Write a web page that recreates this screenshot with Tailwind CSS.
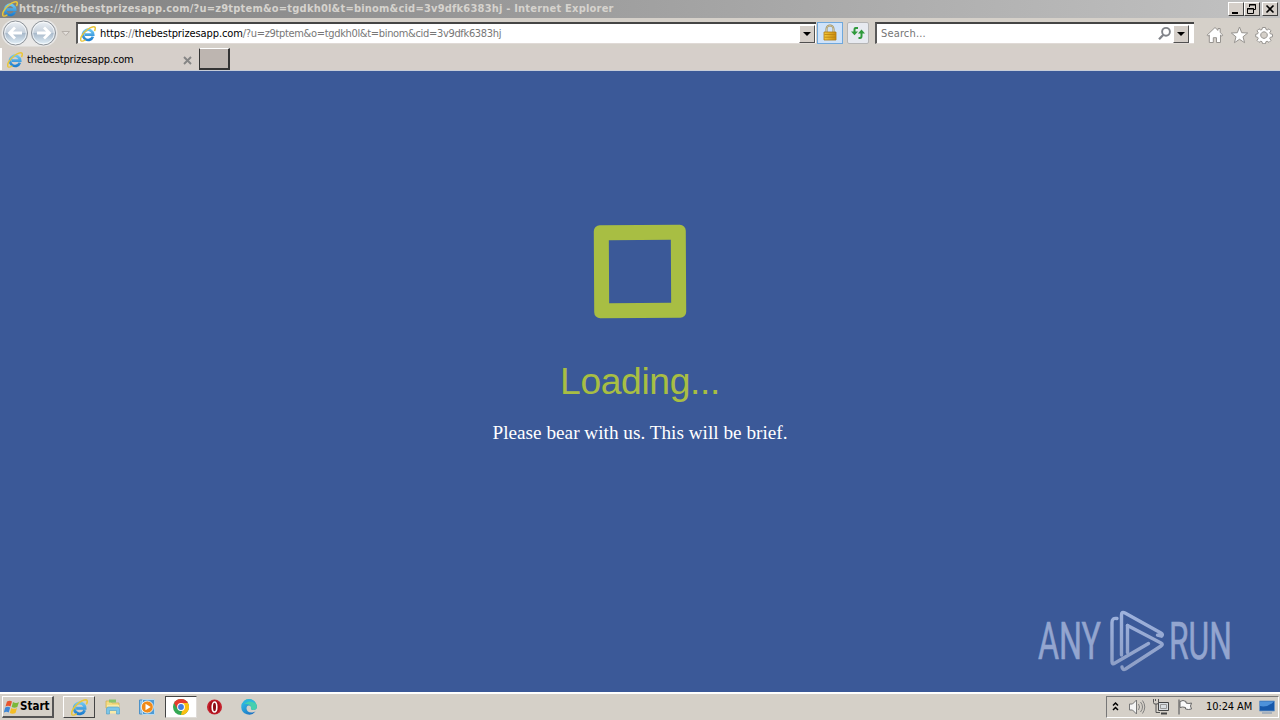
<!DOCTYPE html>
<html lang="en">
<head>
<meta charset="utf-8">
<title>Internet Explorer</title>
<script src="https://cdn.jsdelivr.net/npm/@tailwindcss/browser@4"></script>
</head>
<body class="w-[1280px] h-[720px] overflow-hidden flex flex-col bg-[#d5cfc9] font-['DejaVu_Sans_Condensed','DejaVu_Sans',sans-serif] text-[11px] text-black">
<svg class="absolute w-0 h-0">
  <defs>
    <linearGradient id="ieb" x1="0" y1="0" x2="0" y2="1"><stop offset="0" stop-color="#6cc6f2"/><stop offset="1" stop-color="#1e7fd0"/></linearGradient>
    <linearGradient id="nav" x1="0" y1="0" x2="0" y2="1"><stop offset="0" stop-color="#eef2f6"/><stop offset=".48" stop-color="#c5d0dc"/><stop offset=".52" stop-color="#a9bacb"/><stop offset="1" stop-color="#e6f3fb"/></linearGradient>
    <linearGradient id="gold" x1="0" y1="0" x2="1" y2="0"><stop offset="0" stop-color="#f5c93c"/><stop offset="1" stop-color="#c98a0c"/></linearGradient>
    <linearGradient id="edge" x1="0" y1="0" x2="1" y2="1"><stop offset="0" stop-color="#36c5e8"/><stop offset="1" stop-color="#1561bd"/></linearGradient>
    <linearGradient id="wm" gradientUnits="userSpaceOnUse" x1="0" y1="610" x2="0" y2="672"><stop offset="0" stop-color="#9fb3de"/><stop offset="1" stop-color="#8c9dc4"/></linearGradient>
    <symbol id="ie" viewBox="0 0 16 16">
      <path d="M12.9 10.6A5.1 5.1 0 1 1 13.2 8.7H4.8" fill="none" stroke="url(#ieb)" stroke-width="2.7"/>
      <path d="M1.200 14.900C-.8 12.800 3 6.800 7.600 3.500C11 .9 14.600 .1 15.200 1.600C15.500 2.500 15.100 3.800 14.400 5" fill="none" stroke="#e9c63a" stroke-width="1.500"/>
      <path d="M1.200 14.900C2.200 15.600 4 14.800 5.400 13.800" fill="none" stroke="#e9c63a" stroke-width="1.300"/>
    </symbol>
  </defs>
</svg>

<header class="h-[18px] shrink-0 flex items-center pl-[2px] pr-[2px] bg-linear-to-r from-[#808080] to-[#c2c2c2]">
  <svg class="w-4 h-4 shrink-0"><use href="#ie"/></svg>
  <h1 class="ml-[1px] font-bold text-[#d6d3ce] text-[11px] leading-[18px] whitespace-nowrap tracking-[0.21px]">https://thebestprizesapp.com/?u=z9tptem&amp;o=tgdkh0l&amp;t=binom&amp;cid=3v9dfk6383hj - Internet Explorer</h1>
  <div class="ml-auto flex">
    <button class="w-4 h-[14px] bg-[#d5cfc9] border border-t-white border-l-white border-r-[#404040] border-b-[#404040]"><svg class="w-[14px] h-3"><path d="M3 9h6v2H3z"/></svg></button>
    <button class="w-4 h-[14px] bg-[#d5cfc9] border border-t-white border-l-white border-r-[#404040] border-b-[#404040]"><svg class="w-[14px] h-3" fill="none" stroke="#000"><path d="M4.500 4V1.500h6v5H9M2.500 5.500h6v5h-6zM4 2h7M2 6h7"/></svg></button>
    <button class="ml-[2px] w-4 h-[14px] bg-[#d5cfc9] border border-t-white border-l-white border-r-[#404040] border-b-[#404040]"><svg class="w-[14px] h-3" stroke="#000" stroke-width="1.600"><path d="M3.500 2.500l7 7M10.500 2.500l-7 7"/></svg></button>
  </div>
</header>

<nav class="h-[30px] shrink-0 flex items-start bg-[#d5d0c9] pt-[4px]">
  <svg class="w-[76px] h-[28px] -mt-[3px] shrink-0" viewBox="0 19 76 28">
    <path d="M15 19.500h29a13.500 13.500 0 0 1 0 27H15a13.500 13.500 0 0 1 0-27z" fill="#e9e8e7"/>
    <circle cx="15.500" cy="33" r="12" fill="url(#nav)" stroke="#8e9399"/><circle cx="15.500" cy="33" r="10.800" fill="none" stroke="#fff" stroke-opacity=".7"/>
    <circle cx="43.500" cy="33" r="12" fill="url(#nav)" stroke="#8e9399"/><circle cx="43.500" cy="33" r="10.800" fill="none" stroke="#fff" stroke-opacity=".7"/>
    <path d="M22 33H10M15 27.500L9.500 33l5.500 5.500M37 33h12M44 27.500l5.500 5.500-5.500 5.500" fill="none" stroke="#fff" stroke-width="2.800"/>
    <path d="M62 31.500h7.500L65.800 35.500z" fill="#e4e0dc" stroke="#b5afa9"/>
  </svg>
  <div class="w-[740px] h-[22px] shrink-0 flex items-center bg-white border-t-2 border-l-2 border-t-[#454545] border-l-[#5a5a5a] border-b border-b-[#e0dad6]">
    <svg class="ml-[2px] w-4 h-4 shrink-0"><use href="#ie"/></svg>
    <p class="ml-[4px] text-[11px] leading-[18px] whitespace-nowrap text-[#777] tracking-[-0.33px]"><span class="text-black tracking-[-0.1px]">https</span><span class="tracking-[-0.1px]">://</span><span class="text-black tracking-[-0.1px]">thebestprizesapp.com</span>/?u=z9tptem&amp;o=tgdkh0l&amp;t=binom&amp;cid=3v9dfk6383hj</p>
    <button class="ml-auto mr-[1px] w-4 h-[18px] bg-[#d5cfc9] border border-t-white border-l-white border-r-[#505050] border-b-[#505050]"><svg class="w-[14px] h-4"><path d="M3 6h8L7 10z"/></svg></button>
  </div>
  <div class="ml-[1px] w-[26px] h-[22px] bg-[#cfe3fa] border border-[#6fa8dc] shrink-0 flex justify-center">
    <svg class="w-4 h-5" viewBox="0 0 16 20"><path d="M4.500 10V6a3.500 3.500 0 0 1 7 0v4" fill="none" stroke="#9a8a5c" stroke-width="2"/><path d="M4.500 9V6a3.500 3.500 0 0 1 7 0v3" fill="none" stroke="#e5dcb6" stroke-width=".7"/><path d="M2 9h12v8H2z" fill="url(#gold)" stroke="#b07a10" stroke-width=".8"/><path d="M2.500 11.500h11M2.500 14.200h11" stroke="#b98210" stroke-width=".8"/></svg>
  </div>
  <div class="ml-[4px] w-[22px] h-[22px] rounded-[2px] bg-[#e7eaf0] border border-[#b5b5b5] shrink-0">
    <svg class="w-5 h-5" viewBox="0 0 20 20" fill="none" stroke="#2f9a3c" stroke-width="2"><path d="M10 5H7.500Q6.500 5 6.500 7v3M10.500 15h1.500Q13.500 15 13.500 13V9"/><path d="M3 8.500h7L6.500 12.200zM10 10.500h7L13.500 6.500z" fill="#2f9a3c" stroke="none"/></svg>
  </div>
  <div class="ml-[6px] w-[319px] h-[22px] shrink-0 flex items-center bg-white border-t-2 border-l-2 border-t-[#454545] border-l-[#5a5a5a] border-b border-b-[#e0dad6]">
    <p class="ml-[4px] text-[#757575] leading-[18px] tracking-[0.15px]">Search...</p>
    <svg class="ml-auto w-4 h-[18px]" viewBox="0 0 16 18" fill="none" stroke="#808389"><circle cx="9" cy="6.800" r="3.900" stroke-width="1.900"/><path d="M6.200 10L2 14.200" stroke-width="2.300"/></svg>
    <button class="mr-[5px] w-4 h-[18px] bg-[#d5cfc9] border border-t-white border-l-white border-r-[#505050] border-b-[#505050]"><svg class="w-[14px] h-4"><path d="M3 6h8L7 10z"/></svg></button>
  </div>
  <svg class="ml-[11px] w-[70px] h-[22px] shrink-0" viewBox="1205 22 70 22" fill="#fff" stroke="#96938f" stroke-linejoin="round">
    <path d="M1207 35.200l8-7.700 3 2.900V28.500h2.200v4l2.700 2.700-1 1-1.400-1.200V42.500h-4v-4.800h-3.200v4.800h-4V35l-1.300 1.200z"/>
    <path d="M1239.500 27l2.200 5.700 6 .3-4.700 3.800 1.600 5.900-5.100-3.400-5.100 3.400 1.600-5.900-4.700-3.800 6-.3z"/>
    <path fill-rule="evenodd" d="M1262.500 27.500h3l.5 2 1.200.5 1.800-1.200 2 2-1.200 1.800.5 1.200 2.200.5v2.500l-2.200.5-.5 1.200 1.200 1.900-2 2-1.900-1.200-1.200.5-.4 2h-3l-.5-2-1.200-.5-1.800 1.200-2-2 1.200-1.900-.5-1.200-2-.5v-2.500l2-.5.5-1.200-1.200-1.800 2-2 1.800 1.200 1.200-.5zM1264 31.800a3.300 3.300 0 1 0 .01 0z"/>
  </svg>
</nav>

<div class="h-[23px] shrink-0 flex bg-[#d6cfca] border-b border-b-[#c6ccd8]">
  <div class="w-[199px] flex items-center border-l-2 border-white pl-[5px] pt-[2px]">
    <svg class="w-4 h-4 shrink-0"><use href="#ie"/></svg>
    <p class="ml-[4px] leading-[20px] tracking-[-0.18px]">thebestprizesapp.com</p>
    <svg class="ml-auto mr-[7px] w-[9px] h-[9px]" stroke="#858585" stroke-width="1.900"><path d="M1 1l7 7M8 1l-7 7"/></svg>
  </div>
  <div class="w-[31px] h-[22px] bg-[#bdb5b0] border-l-[1.500px] border-t border-r-2 border-b-2 border-t-white border-l-[#333] border-r-[#333] border-b-[#333]"></div>
</div>

<main class="h-[621px] shrink-0 relative bg-[#3b5998] flex flex-col items-center">
  <div class="mt-[153.500px] w-[92px] h-[93px] border-[15px] border-[#a8be43] rounded-[6px] -rotate-[0.3deg]"></div>
  <h2 class="mt-[41.500px] h-[44px] leading-[44px] text-[37.300px] tracking-[-0.4px] text-[#a8be43] font-['Liberation_Sans',Arial,sans-serif] whitespace-nowrap">Loading...</h2>
  <svg class="mt-[17px] w-[300px] h-[28px]"><text x="2.500" y="19" textLength="295" lengthAdjust="spacingAndGlyphs" class="fill-white text-[18.500px] font-['Palatino_Linotype',Palatino,'Liberation_Serif',serif]">Please bear with us. This will be brief.</text></svg>
  <svg class="absolute left-[1030px] top-[534px] w-[220px] h-[80px]" viewBox="1030 605 220 80" fill="none">
    <text x="1038" y="659" textLength="63" lengthAdjust="spacingAndGlyphs" class="fill-[#93a5cf] stroke-[#93a5cf] stroke-[0.6px] font-['Roboto',sans-serif] text-[51px]">ANY</text>
    <text x="1169" y="659" textLength="63" lengthAdjust="spacingAndGlyphs" class="fill-[#93a5cf] stroke-[#93a5cf] stroke-[0.6px] font-['Roboto',sans-serif] text-[51px]">RUN</text>
    <g stroke="url(#wm)" stroke-width="3.400" stroke-linejoin="round" stroke-linecap="round">
      <path d="M1117 618.500q-5-1-5 4V661.500q0 3.500 3 1.500L1148.500 643.500"/>
      <path d="M1121.500 655V615q0-4 3.500-2L1161 633q2.500 1.500 .5 3.200l-4-1"/>
      <path d="M1127.500 625.500L1161 643q2.500 1.500 0 3L1125.500 669q-3 1.500-3.500-2"/>
      <path d="M1127.500 625.500V652.500"/>
    </g>
  </svg>
</main>

<footer class="h-[28px] shrink-0 flex items-center bg-[#d5d0c8] border-t-2 border-white pr-px">
  <button class="ml-[2px] w-[52px] h-[22px] flex items-center pl-[1px] border border-t-white border-l-white border-r-2 border-b-2 border-r-[#555] border-b-[#555]">
    <svg class="w-4 h-4 shrink-0" viewBox="0 0 16 16"><path d="M3 2.500Q6 .8 8 2.500L6.500 7.500Q4 6 1.500 7.500z" fill="#e8552d"/><path d="M9 3Q12 5 15 3L13.300 8Q10.500 9.500 7.700 8z" fill="#7bb83a"/><path d="M1.200 8.500Q4 7 6.200 8.500L4.700 13.500Q2.500 12-.2 13.500z" fill="#3f87d6"/><path d="M7.300 9Q10 10.700 13 9L11.500 14Q8.500 15.500 5.800 14z" fill="#f4bd25"/></svg>
    <span class="font-bold text-[11.500px] leading-none">Start</span>
  </button>
  <div class="ml-[9px] w-[32px] h-[22px] flex items-center justify-center border border-t-white border-l-white border-r-[#444] border-b-[#444]"><svg class="w-[17px] h-[17px]" viewBox="0 0 16 16"><use href="#ie"/></svg></div>
  <svg class="ml-[10px] w-4 h-[18px]" viewBox="0 0 16 18"><path d="M1 3h5l1 2h7v5H1z" fill="#f3dc82" stroke="#d0ae4a" stroke-width=".7"/><path d="M4 1.500h7v3H4z" fill="#88c46c"/><path d="M2 7h12v8.500H2z" fill="#f8e9a8"/><path d="M1.500 16v-5q0-2 2-2h9q2 0 2 2v5h-3v-3.500h-7V16z" fill="#7cc5e8" stroke="#4d9dc6" stroke-width=".6"/></svg>
  <svg class="ml-[18px] w-4 h-4" viewBox="0 0 16 16"><path d="M.5 1h11v14H.5z" fill="#8ec2e9" stroke="#4d92c8"/><path d="M3.500.5h12v15h-12z" fill="#4f9bd5" stroke="#b7d9ef"/><circle cx="8.300" cy="8" r="6" fill="#f18a18" stroke="#fff" stroke-width=".8"/><path d="M6.500 4.700L11.700 8l-5.200 3.300z" fill="#fff"/></svg>
  <div class="ml-[10px] w-[32px] h-[22px] flex items-center justify-center bg-white border border-t-[#444] border-l-[#444] border-[#e0dcd8]"><svg class="w-4 h-4" viewBox="0 0 16 16"><circle cx="8" cy="8" r="8" fill="#34a853"/><path d="M1.070 4A8 8 0 0 1 14.930 4L8 8z" fill="#e53b2e"/><path d="M14.930 4A8 8 0 0 1 8 16L10 8 8 4z" fill="#fbbf12"/><path d="M1.070 4H8v3L4.500 10z" fill="#e53b2e"/><circle cx="8" cy="8" r="3.900" fill="#fff"/><circle cx="8" cy="8" r="2.900" fill="#3f7de0"/></svg></div>
  <svg class="ml-[9px] w-4 h-4" viewBox="0 0 16 16"><circle cx="8.500" cy="8" r="7.500" fill="#c4202c"/><ellipse cx="8.500" cy="8" rx="5.500" ry="6.600" fill="#a70e18"/><ellipse cx="8.500" cy="8" rx="2.300" ry="5" fill="#8b0c14" stroke="#fff" stroke-width="1.600"/></svg>
  <svg class="ml-[19px] w-4 h-4" viewBox="0 0 16 16"><path d="M.2 8A8 8 0 0 1 16 7.500Q16 11 12 11 9.500 11 10 9 10.500 6.500 8 6.500 5.500 6.500 5.500 9.500 6 14 11.500 13.500L14.500 12.500A8 8 0 0 1 .2 8z" fill="url(#edge)"/><path d="M3.500 1.500A8 8 0 0 1 16 7.500Q16 11 12 11 9.500 11 10 9 10 4.500 3.500 5z" fill="#45cfae"/><path d="M.2 8A8 8 0 0 1 9 .1Q13 .8 14.500 4.500 9 1 5 4 1 5 .2 8z" fill="#2cb5df"/></svg>
  <div class="ml-auto w-[173px] h-[22px] flex items-center border border-t-[#777] border-l-[#777] border-r-white border-b-white">
    <svg class="ml-[5px] w-[8px] h-[12px]" fill="none" stroke="#000" stroke-width="1.500"><path d="M1 4.500L3.500 2 6 4.500M1 9L3.500 6.500 6 9"/></svg>
    <svg class="ml-[7px] w-[72px] h-[18px]" viewBox="1127 698 72 18" fill="none" stroke="#777">
      <path d="M1129.500 704h3l4-4v14l-4-4h-3z" fill="#f5f5f5"/><path d="M1138.500 704q2 3 0 6M1140.500 702q4 5 0 10M1142.500 700.500q4.500 6.500 0 13" stroke-width=".9"/>
      <path d="M1158.500 702.500h10v8h-10z" fill="#d9dee2" stroke="#444"/><path d="M1160.500 704.500h6v4h-6z" stroke="#999"/><path d="M1161 713.500h6" stroke="#444" stroke-width="2"/><path d="M1153.500 699v3.500q0 1.500 1.500 1.500h2q1.500 0 1.500-1.500V699M1155.500 699v2M1156 704v8.500h4" stroke="#555"/>
      <path d="M1179 699.500v15" stroke-width="1.500"/><path d="M1180 701.500q3-2 6 0v1.500q3 1 5.500 0l-1 3 1 3q-3 1-6 0v-1.500q-3-1-5.500 0z" fill="#fafafa" stroke="#666"/>
    </svg>
    <time class="ml-[7px] pt-[1px] text-[11px] whitespace-nowrap tracking-[-0.100px]">10:24 AM</time>
    <svg class="ml-auto mr-[3px] w-4 h-4" viewBox="0 0 16 16"><path d="M.5 2h15v10H.5z" fill="#1758aa" stroke="#7098c5" stroke-width=".8"/><path d="M1 2.500h14Q8 9 1 7z" fill="#4d91da"/><path d="M3 14h10" stroke="#97a7b8" stroke-width="1.500"/></svg>
  </div>
</footer>
</body>
</html>
